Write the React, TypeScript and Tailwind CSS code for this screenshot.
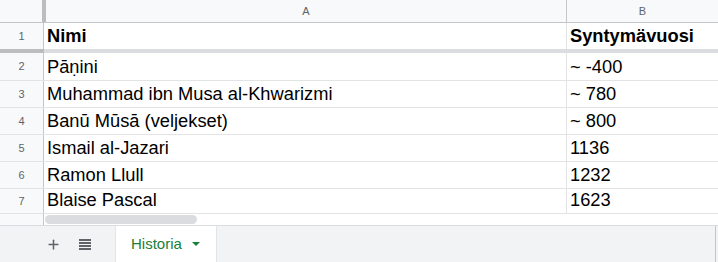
import { Plus } from 'lucide-react';

const rows = [
    { n: 2, name: 'Pāṇini', year: '~ -400', h: 'h-[28px]' },
    { n: 3, name: 'Muhammad ibn Musa al-Khwarizmi', year: '~ 780', h: 'h-[27px]' },
    { n: 4, name: 'Banū Mūsā (veljekset)', year: '~ 800', h: 'h-[27px]' },
    { n: 5, name: 'Ismail al-Jazari', year: '1136', h: 'h-[27px]' },
    { n: 6, name: 'Ramon Llull', year: '1232', h: 'h-[27px]' },
    { n: 7, name: 'Blaise Pascal', year: '1623', h: 'h-[25px]' },
];

function RowNum({ n }: { n: number }) {
    return (
        <div className="w-[44px] shrink-0 bg-[#f8f9fa] border-r border-[#c4c7c5] flex items-center justify-center text-[11px] text-[#5f6368]">
            {n}
        </div>
    );
}

export default function App() {
    return (
        <div className="w-[718px] h-[262px] overflow-hidden bg-white flex flex-col text-black" style={{ fontFamily: '"Liberation Sans", Arial, sans-serif' }}>
            {/* column headers */}
            <div className="h-[23px] shrink-0 flex bg-[#f8f9fa] border-b border-[#c4c7c5]">
                <div className="w-[46px] shrink-0 border-r-[4px] border-[#bdbdbd]"></div>
                <div className="w-[521px] shrink-0 border-r border-[#c4c7c5] flex items-center justify-center text-[11px] text-[#5f6368]">A</div>
                <div className="flex-1 flex items-center justify-center text-[11px] text-[#5f6368]">B</div>
            </div>

            {/* frozen row */}
            <div className="h-[26px] shrink-0 flex">
                <RowNum n={1} />
                <div className="w-[523px] shrink-0 border-r border-[#e2e3e3] flex items-end pl-[3px] pb-[3px] text-[18.3px] leading-[21px] font-bold">Nimi</div>
                <div className="flex-1 flex items-end pl-[3px] pb-[3px] text-[18.3px] leading-[21px] font-bold">Syntymävuosi</div>
            </div>
            <div className="h-[4px] shrink-0 flex">
                <div className="w-[44px] shrink-0 bg-[#bdbdbd]"></div>
                <div className="flex-1 bg-[#dadce0]"></div>
            </div>

            {rows.map((r) => (
                <div key={r.n} className={`${r.h} shrink-0 flex border-b border-[#e2e3e3]`}>
                    <RowNum n={r.n} />
                    <div className="w-[523px] shrink-0 border-r border-[#e2e3e3] flex items-end pl-[3px] pb-[3px] text-[18.3px] leading-[21px]">{r.name}</div>
                    <div className="flex-1 flex items-end pl-[3px] pb-[3px] text-[18.3px] leading-[21px]">{r.year}</div>
                </div>
            ))}

            {/* horizontal scrollbar band */}
            <div className="h-[11px] shrink-0 flex">
                <div className="w-[44px] shrink-0 bg-[#f8f9fa] border-r border-[#c4c7c5]"></div>
                <div className="flex-1 pl-[1px] pt-[1px]">
                    <div className="w-[152px] h-[9px] rounded-full bg-[#dadce0]"></div>
                </div>
            </div>

            {/* sheet tabs */}
            <div className="flex-1 flex bg-[#f1f3f4] border-t border-[#dadce0]">
                <div className="w-[115px] shrink-0 flex items-center pl-[46px] gap-[18px] text-[#5f6368]">
                    <Plus size={15} strokeWidth={2.4} />
                    <svg width="12" height="11" viewBox="0 0 12 11" className="shrink-0">
                        <rect x="0" y="0" width="12" height="2" fill="#5f6368" />
                        <rect x="0" y="3" width="12" height="2" fill="#5f6368" />
                        <rect x="0" y="6" width="12" height="2" fill="#5f6368" />
                        <rect x="0" y="9" width="12" height="2" fill="#5f6368" />
                    </svg>
                </div>
                <div className="w-[102px] shrink-0 bg-white border-x border-[#e3e4e5] flex items-center pl-[15px] gap-[10px] text-[#188038]">
                    <span className="text-[15px]">Historia</span>
                    <svg width="8" height="4" viewBox="0 0 8 4"><path d="M0 0 L8 0 L4 4 Z" fill="#188038" /></svg>
                </div>
                <div className="flex-1"></div>
                <div className="w-[1px] bg-[#c4c7c5] mr-[2px]"></div>
            </div>
        </div>
    );
}
